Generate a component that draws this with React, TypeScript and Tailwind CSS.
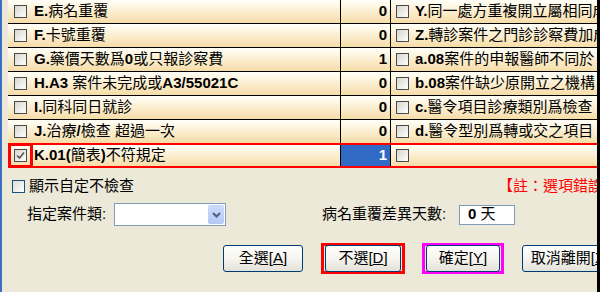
import React from 'react';

const FONT = { fontFamily: '"Liberation Sans", "Noto Sans CJK TC", sans-serif' };

const leftRows = [
  { label: 'E.病名重覆', n: 0 },
  { label: 'F.卡號重覆', n: 0 },
  { label: 'G.藥價天數爲0或只報診察費', n: 1 },
  { label: 'H.A3 案件未完成或A3/55021C', n: 0 },
  { label: 'I.同科同日就診', n: 0 },
  { label: 'J.治療/檢查 超過一次', n: 0 },
  { label: 'K.01(簡表)不符規定', n: 1, checked: true },
];

const rightRows = [
  'Y.同一處方重複開立屬相同成分',
  'Z.轉診案件之門診診察費加成',
  'a.08案件的申報醫師不同於',
  'b.08案件缺少原開立之機構',
  'c.醫令項目診療類別爲檢查',
  'd.醫令型別爲轉或交之項目',
  '',
];

// ascii runs are bold, cjk stays regular
function Label({ text }: { text: string }) {
  const parts = text.split(/([\x00-\x7F]+)/).filter(Boolean);
  return (
    <span className="whitespace-pre">
      {parts.map((p, i) =>
        /^[\x00-\x7F]+$/.test(p) ? (
          <b key={i} className="font-bold">{p}</b>
        ) : (
          <span key={i}>{p}</span>
        )
      )}
    </span>
  );
}

function GridCheck({ checked }: { checked?: boolean }) {
  return (
    <span className="flex h-[13px] w-[13px] items-center justify-center border border-[#4a4a4a] bg-gradient-to-br from-[#d8d6cc] to-white">
      {checked && (
        <svg width="9" height="9" viewBox="0 0 9 9">
          <path d="M1 4.5 L3.5 7 L8 1.5" fill="none" stroke="#555" strokeWidth="1.6" />
        </svg>
      )}
    </span>
  );
}

function XpButton({ children, w }: { children: React.ReactNode; w: string }) {
  return (
    <button
      className={`${w} h-[27px] rounded-[3px] border border-[#003c74] bg-gradient-to-b from-white via-[#f6f5f0] to-[#e3e1d8] text-[15px] text-black`}
    >
      {children}
    </button>
  );
}

export default function App() {
  return (
    <div className="flex h-[292px] w-[600px] overflow-hidden bg-[#ece9d8] text-[15px] text-black" style={FONT}>
      <div className="w-[2px] shrink-0 bg-[#3a6fc4]" />
      <div className="flex w-[595px] shrink-0 flex-col overflow-hidden">
        {/* grid */}
        <div className="ml-[6px] flex w-[700px] flex-col">
          {leftRows.map((r, i) => {
            const sel = !!r.checked;
            return (
              <div
                key={i}
                className={`flex h-[24px] border-b bg-gradient-to-b from-[#fffff8] to-[#f6dda7] ${
                  sel ? 'border-b-2 border-t-2 border-[#ff0000] h-[25px] -mt-[1px]' : i === 5 ? 'border-[#000]' : 'border-black'
                }`}
              >
                <div
                  className={`flex w-[25px] shrink-0 items-center justify-center ${
                    sel ? '-my-[2px] border-[3px] border-[#ff0000]' : ''
                  }`}
                >
                  <GridCheck checked={r.checked} />
                </div>
                <div className="flex w-[308px] shrink-0 items-center border-r border-black pl-[1px]">
                  <Label text={r.label} />
                </div>
                <div
                  className={`flex w-[50px] shrink-0 items-center justify-end border-r border-black pr-[3px] font-bold ${
                    sel ? 'bg-[#316ac5] text-white' : ''
                  }`}
                >
                  {r.n}
                </div>
                <div className="flex w-[22px] shrink-0 items-center justify-center">
                  <GridCheck />
                </div>
                <div className="flex flex-1 items-center overflow-hidden whitespace-nowrap pl-[2px]">
                  <Label text={rightRows[i]} />
                </div>
              </div>
            );
          })}
        </div>

        {/* options */}
        <div className="mt-[10px] flex h-[16px] items-center whitespace-nowrap">
          <div className="flex w-[496px] shrink-0 items-center pl-[10px]">
            <span className="h-[13px] w-[13px] border border-[#1c5180] bg-gradient-to-br from-[#dcdcd4] to-white" />
            <span className="ml-[4px]">顯示自定不檢查</span>
          </div>
          <span className="text-[#ff0000]">【註：選項錯誤】</span>
        </div>

        <div className="mt-[9px] flex h-[23px] items-center whitespace-nowrap">
          <span className="ml-[25px] w-[87px] shrink-0">指定案件類:</span>
          <div className="flex h-[23px] w-[112px] shrink-0 items-center justify-end border border-[#7f9db9] bg-white pr-[1px]">
            <span className="flex h-[19px] w-[16px] items-center justify-center rounded-[2px] bg-gradient-to-b from-[#cbdafc] to-[#b3c9f5]">
              <svg width="9" height="6" viewBox="0 0 9 6">
                <path d="M1 1 L4.5 4.5 L8 1" fill="none" stroke="#4d6185" strokeWidth="2" />
              </svg>
            </span>
          </div>
          <span className="ml-[96px] w-[137px] shrink-0">病名重覆差異天數:</span>
          <div className="flex h-[20px] w-[56px] shrink-0 items-center border border-[#7f9db9] bg-white pl-[8px]">
            <Label text="0 天" />
          </div>
        </div>

        <div className="mt-[17px] flex items-center whitespace-nowrap">
          <div className="ml-[221px] shrink-0">
            <XpButton w="w-[80px]">
              全選[<u>A</u>]
            </XpButton>
          </div>
          <div className="ml-[18px] flex h-[31px] w-[84px] shrink-0 items-center justify-center border-[3px] border-[#ff0000]">
            <XpButton w="w-[76px]">
              不選[<u>D</u>]
            </XpButton>
          </div>
          <div className="ml-[17px] flex h-[31px] w-[82px] shrink-0 items-center justify-center border-[3px] border-[#ff00ff]">
            <XpButton w="w-[74px]">
              確定[<u>Y</u>]
            </XpButton>
          </div>
          <div className="ml-[18px] shrink-0">
            <XpButton w="w-[96px]">
              取消離開[<u>X</u>]
            </XpButton>
          </div>
        </div>
      </div>
      <div className="w-[3px] shrink-0 bg-black" />
    </div>
  );
}
